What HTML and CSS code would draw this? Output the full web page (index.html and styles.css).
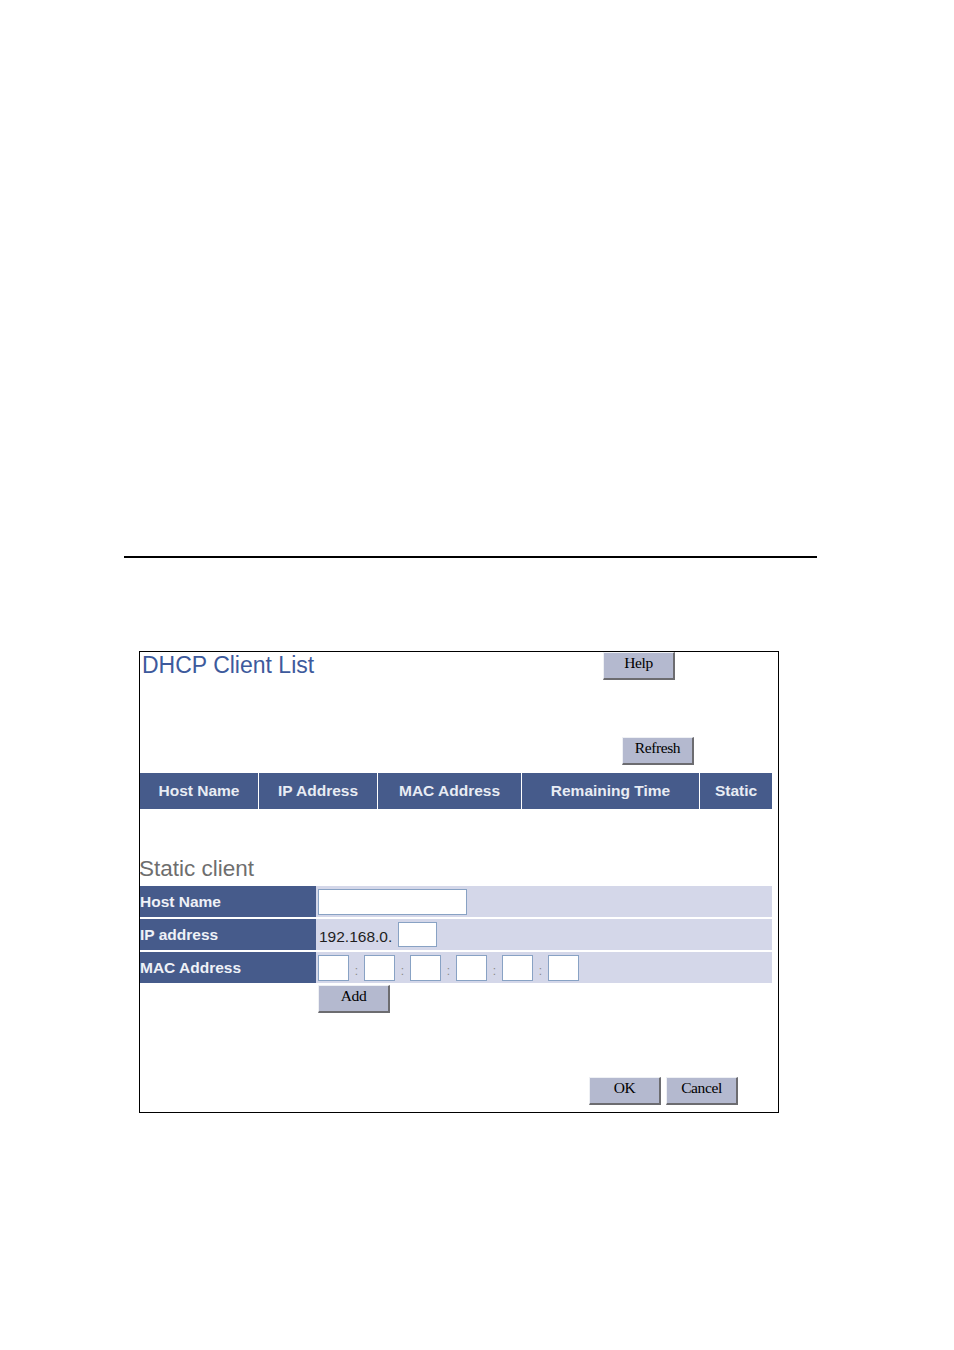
FILE: index.html
```html
<!DOCTYPE html>
<html>
<head>
<meta charset="utf-8">
<title>DHCP Client List</title>
<link rel="stylesheet" href="styles.css">
</head>
<body>
<div class="page">
  <div class="rule"></div>
  <div class="frame">
    <div class="top-row">
      <div class="title">DHCP Client List</div>
      <button class="btn">Help</button>
    </div>
    <div class="refresh-row">
      <button class="btn">Refresh</button>
    </div>
    <div class="list-head">
      <div class="col c1">Host Name</div>
      <div class="col c2">IP Address</div>
      <div class="col c3">MAC Address</div>
      <div class="col c4">Remaining Time</div>
      <div class="col c5">Static</div>
    </div>
    <div class="section-title">Static client</div>
    <div class="form">
      <div class="row">
        <div class="label">Host Name</div>
        <div class="value"><input class="field host" type="text"></div>
      </div>
      <div class="row">
        <div class="label">IP address</div>
        <div class="value"><span class="prefix">192.168.0.</span><input class="field ip" type="text"></div>
      </div>
      <div class="row">
        <div class="label">MAC Address</div>
        <div class="value">
          <input class="field mac" type="text"><span class="colon">:</span>
          <input class="field mac" type="text"><span class="colon">:</span>
          <input class="field mac" type="text"><span class="colon">:</span>
          <input class="field mac" type="text"><span class="colon">:</span>
          <input class="field mac" type="text"><span class="colon">:</span>
          <input class="field mac" type="text">
        </div>
      </div>
    </div>
    <div class="add-row">
      <button class="btn">Add</button>
    </div>
    <div class="actions">
      <button class="btn">OK</button>
      <button class="btn">Cancel</button>
    </div>
  </div>
</div>
</body>
</html>
```

FILE: styles.css
```css
html, body {
  margin: 0;
  padding: 0;
  background: #ffffff;
}

.page {
  width: 954px;
  height: 1350px;
  padding-top: 1px;
  box-sizing: border-box;
  font-family: "Liberation Sans", Arial, sans-serif;
}

.rule {
  margin-top: 555px;
  margin-left: 124px;
  width: 693px;
  height: 2px;
  background: #000000;
}

.frame {
  margin-top: 93px;
  margin-left: 139px;
  width: 638px;
  height: 460px;
  border: 1px solid #000000;
}

.top-row {
  display: flex;
  height: 27px;
}

.title {
  flex: 0 0 461px;
  padding-left: 2px;
  font-size: 23px;
  line-height: 27px;
  color: #3d5a9c;
}

.refresh-row {
  margin-top: 58px;
  height: 28px;
  padding-left: 482px;
  display: flex;
}

.btn {
  box-sizing: border-box;
  width: 72px;
  height: 28px;
  padding: 0 0 6px 0;
  margin: 0;
  background: #b4b9cf;
  border-style: solid;
  border-width: 1px 2px 2px 1px;
  border-color: #eef0f4 #6c6c70 #6c6c70 #eef0f4;
  font-family: "Liberation Serif", "Times New Roman", serif;
  font-size: 15.5px;
  letter-spacing: -0.4px;
  color: #000000;
}

.list-head {
  margin-top: 8px;
  width: 632px;
  height: 36px;
  display: flex;
  background: #ffffff;
}

.col {
  background: #465b8b;
  color: #e8ecf4;
  font-weight: bold;
  font-size: 15.5px;
  display: flex;
  align-items: center;
  justify-content: center;
}

.c1 { width: 118px; }
.c2 { width: 118px; margin-left: 1px; }
.c3 { width: 143px; margin-left: 1px; }
.c4 { width: 177px; margin-left: 1px; }
.c5 { width: 72px; margin-left: 1px; }

.section-title {
  margin-top: 43px;
  margin-left: -1px;
  height: 34px;
  font-size: 22.5px;
  line-height: 34px;
  color: #6e6e6e;
}

.form {
  width: 632px;
  display: flex;
  flex-direction: column;
  gap: 2px;
}

.row {
  display: flex;
  height: 31px;
}

.label {
  flex: 0 0 176px;
  background: #465b8b;
  color: #eef1f7;
  font-weight: bold;
  font-size: 15.5px;
  line-height: 31px;
}

.value {
  flex: 1;
  background: #d4d7e9;
  display: flex;
  align-items: center;
  padding-left: 2px;
}

.field {
  box-sizing: border-box;
  margin: 0;
  padding: 0;
  height: 26px;
  background: #ffffff;
  border: 1px solid #88a2c4;
}

.host { width: 149px; }

.prefix {
  font-size: 15.5px;
  color: #1e1e1e;
  margin: 4px 6px 0 1px;
}

.ip { width: 39px; height: 25px; }

.mac { width: 31px; }

.colon {
  width: 15px;
  text-align: center;
  font-size: 12px;
  color: #8a8a8a;
  margin-top: 6px;
}

.add-row {
  margin-top: 2px;
  padding-left: 178px;
  display: flex;
}

.actions {
  margin-top: 64px;
  padding-left: 449px;
  display: flex;
  gap: 5px;
}
```
